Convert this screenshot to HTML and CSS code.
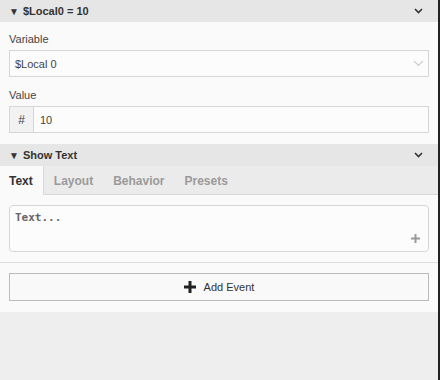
FILE: index.html
```html
<!DOCTYPE html>
<html lang="en">
<head>
  <meta charset="UTF-8">
  <title>Event editor</title>
  <link rel="stylesheet" href="styles.css">
</head>
<body>
<div id="panel">
  <div class="section-head">
    <span class="caret">&#9660;</span>
    <span class="head-title">$Local0 = 10</span>
    <svg class="head-chevron" width="9" height="6" viewBox="0 0 9 6"><path d="M1 1l3.5 3.5L8 1" fill="none" stroke="#333" stroke-width="1.6"/></svg>
  </div>
  <div class="section-body">
    <label class="field-label">Variable</label>
    <div class="select">
      <span>$Local 0</span>
      <svg width="11" height="7" viewBox="0 0 11 7"><path d="M1 1l4.5 4.5L10 1" fill="none" stroke="#ccc" stroke-width="1.2"/></svg>
    </div>
    <label class="field-label">Value</label>
    <div class="number-input">
      <span class="prefix">#</span>
      <span class="value">10</span>
    </div>
  </div>

  <div class="section-head">
    <span class="caret">&#9660;</span>
    <span class="head-title">Show Text</span>
    <svg class="head-chevron" width="9" height="6" viewBox="0 0 9 6"><path d="M1 1l3.5 3.5L8 1" fill="none" stroke="#333" stroke-width="1.6"/></svg>
  </div>
  <div class="tabs">
    <span class="tab active">Text</span>
    <span class="tab">Layout</span>
    <span class="tab">Behavior</span>
    <span class="tab">Presets</span>
  </div>
  <div class="text-body">
    <div class="textarea">
      <span class="placeholder">Text...</span>
      <svg class="add-var" width="9" height="9" viewBox="0 0 9 9"><path d="M4.5 0v9M0 4.5h9" stroke="#999" stroke-width="2"/></svg>
    </div>
  </div>

  <div class="events">
    <button class="add-event">
      <svg width="12" height="12" viewBox="0 0 12 12"><path d="M6 0v12M0 6h12" stroke="#222" stroke-width="3"/></svg>
      Add Event
    </button>
  </div>
  <div class="empty"></div>
</div>
</body>
</html>
```

FILE: styles.css
```css
html, body {
  margin: 0;
  padding: 0;
  height: 100%;
}

body {
  font-family: "Liberation Sans", Arial, sans-serif;
  font-size: 11px;
  color: #444;
  background-color: #222;
}

#panel {
  width: 438px;
  height: 380px;
  background-color: #fafafa;
  display: flex;
  flex-direction: column;
}

.section-head {
  height: 22px;
  background-color: #e6e6e6;
  display: flex;
  align-items: center;
  padding: 0 15px 0 9px;
  font-weight: bold;
  color: #333;
}

.caret {
  font-size: 10px;
  margin-right: 4px;
}

.head-title {
  flex: 1;
}

.section-body {
  padding: 11px 9px 11px 9px;
}

.field-label {
  display: block;
  margin-bottom: 4px;
  line-height: 13px;
}

.select {
  height: 25px;
  border: 1px solid #d6d6d6;
  background-color: #fcfcfc;
  display: flex;
  align-items: center;
  justify-content: space-between;
  padding: 0 4px 0 5px;
  margin-bottom: 12px;
}

.number-input {
  height: 25px;
  border: 1px solid #d6d6d6;
  background-color: #fcfcfc;
  display: flex;
  align-items: center;
}

.prefix {
  width: 23px;
  height: 100%;
  border-right: 1px solid #d6d6d6;
  background-color: #f2f2f2;
  display: flex;
  align-items: center;
  justify-content: center;
  font-size: 12px;
}

.value {
  padding-left: 6px;
}

.tabs {
  height: 28px;
  background-color: #ebebeb;
  border-bottom: 1px solid #d8d8d8;
  display: flex;
  font-size: 12px;
  font-weight: bold;
  color: #9a9a9a;
}

.tab {
  padding: 8px 10px 0 10px;
}

.tab.active {
  background-color: #fafafa;
  color: #333;
  padding: 8px 10px 0 9px;
  margin-bottom: -1px;
  border-right: 1px solid #d8d8d8;
}

.text-body {
  padding: 10px 9px 10px 9px;
  border-bottom: 1px solid #dcdcdc;
}

.textarea {
  height: 45px;
  border: 1px solid #d6d6d6;
  border-radius: 4px;
  background-color: #fcfcfc;
  position: relative;
}

.placeholder {
  position: absolute;
  left: 5px;
  top: 5px;
  font-family: "DejaVu Sans Mono", monospace;
  font-size: 11px;
  font-weight: bold;
  color: #666;
}

.add-var {
  position: absolute;
  right: 8px;
  bottom: 8px;
}

.events {
  padding: 10px 9px 11px 9px;
}

.add-event {
  width: 100%;
  height: 28px;
  border: 1px solid #bbb;
  background-color: #f9f9f9;
  font-family: "Liberation Sans", Arial, sans-serif;
  font-size: 11px;
  color: #333;
  display: flex;
  align-items: center;
  justify-content: center;
  gap: 8px;
}

.empty {
  flex: 1;
  background-color: #eeeeee;
}
```
